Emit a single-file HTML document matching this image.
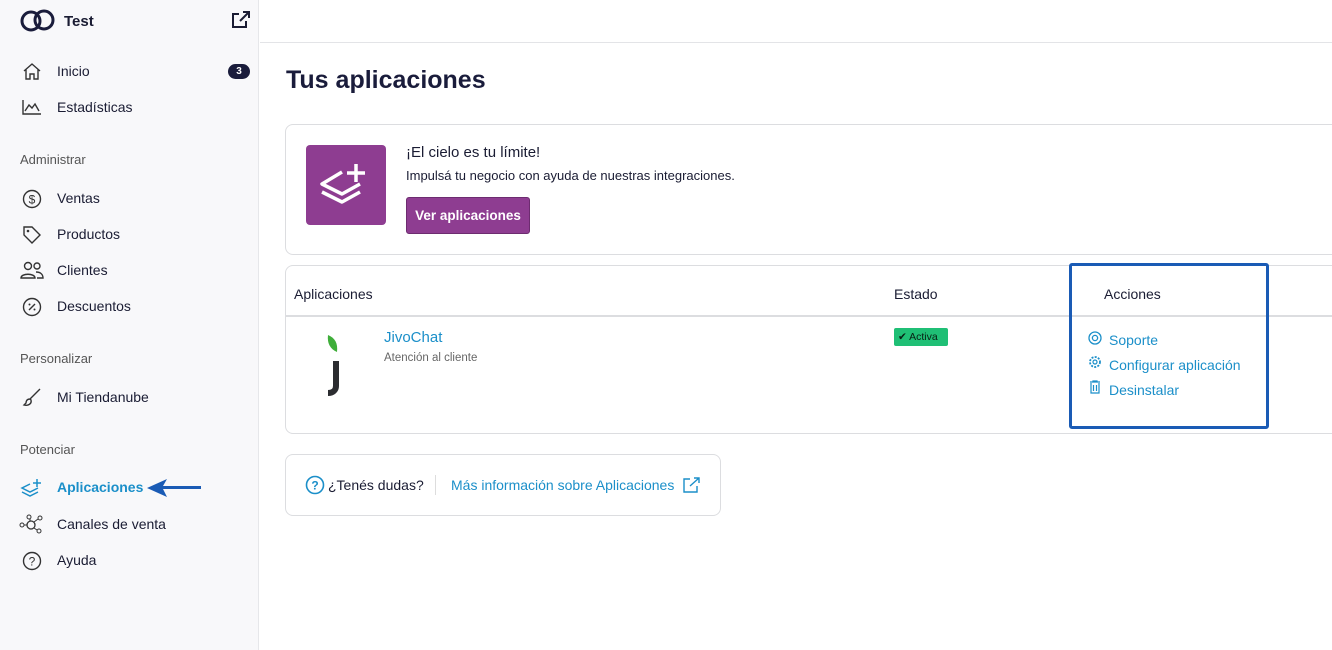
<!DOCTYPE html>
<html><head><meta charset="utf-8"><style>
*{box-sizing:border-box;margin:0;padding:0}
body{width:1332px;height:650px;overflow:hidden;background:#fff;font-family:"Liberation Sans",sans-serif;color:#1a1c33;position:relative}
.sb{position:absolute;left:0;top:0;width:259px;height:650px;background:#f8f8fa;border-right:1px solid #e6e7ea}
.t{position:absolute;font-size:14px;white-space:nowrap}
.ic{position:absolute}
.sec{position:absolute;left:20px;font-size:13px;color:#555}
.card{position:absolute;border:1px solid #dcdde0;border-radius:8px;background:#fff}
.lnk{color:#1b8fc9}
</style></head><body>
<div class="sb">
<svg class="ic" style="left:20px;top:8px" width="36" height="26" viewBox="0 0 36 26"><circle cx="11" cy="13" r="9" fill="none" stroke="#1a1c3b" stroke-width="3"/><circle cx="24" cy="12" r="9" fill="none" stroke="#1a1c3b" stroke-width="3"/></svg>
<div class="t" style="left:64px;top:13px;font-size:15px;font-weight:bold">Test</div>
<svg class="ic" style="left:231px;top:11px" width="20" height="18" viewBox="0 0 20 18"><path d="M8 3H2v13h13v-6" fill="none" stroke="#1a1c33" stroke-width="2"/><path d="M9 10l9-9M12 1h6v6" fill="none" stroke="#1a1c33" stroke-width="2"/></svg>
<svg class="ic" style="left:22px;top:62px" width="20" height="18" viewBox="0 0 20 18"><path d="M2 9L10 2l8 7M4 7v10h4v-5h4v5h4V7" fill="none" stroke="#333" stroke-width="1.4"/></svg>
<div class="t" style="left:57px;top:63px">Inicio</div>
<div style="position:absolute;left:228px;top:64px;width:22px;height:15px;border-radius:8px;background:#1a1c3b;color:#fff;font-size:10px;font-weight:bold;text-align:center;line-height:15px">3</div>
<svg class="ic" style="left:22px;top:99px" width="20" height="16" viewBox="0 0 20 16"><path d="M1 1v14h18M3 12l4-6 3 3 3-4 4 7" fill="none" stroke="#333" stroke-width="1.4"/></svg>
<div class="t" style="left:57px;top:99px">Estadísticas</div>
<div class="sec" style="top:152px">Administrar</div>
<svg class="ic" style="left:22px;top:189px" width="20" height="20" viewBox="0 0 20 20"><circle cx="10" cy="10" r="8.5" fill="none" stroke="#333" stroke-width="1.4"/><text x="10" y="14.5" font-size="12" text-anchor="middle" fill="#333" font-family="Liberation Sans">$</text></svg>
<div class="t" style="left:57px;top:190px">Ventas</div>
<svg class="ic" style="left:22px;top:225px" width="20" height="20" viewBox="0 0 20 20"><path d="M2 2h8l8 8-8 8-8-8z" fill="none" stroke="#333" stroke-width="1.4"/><circle cx="6" cy="6" r="1.3" fill="#333"/></svg>
<div class="t" style="left:57px;top:226px">Productos</div>
<svg class="ic" style="left:20px;top:261px" width="24" height="18" viewBox="0 0 24 18"><circle cx="8" cy="5" r="3.5" fill="none" stroke="#333" stroke-width="1.4"/><circle cx="17" cy="5" r="3" fill="none" stroke="#333" stroke-width="1.4"/><path d="M1 17c0-5 14-5 14 0zM16 11c4 0 7 2 7 6h-6" fill="none" stroke="#333" stroke-width="1.4"/></svg>
<div class="t" style="left:57px;top:262px">Clientes</div>
<svg class="ic" style="left:22px;top:297px" width="20" height="20" viewBox="0 0 20 20"><circle cx="10" cy="10" r="8.5" fill="none" stroke="#333" stroke-width="1.4"/><path d="M7 13l6-6" stroke="#333" stroke-width="1.4"/><circle cx="7.5" cy="7.5" r="1" fill="#333"/><circle cx="12.5" cy="12.5" r="1" fill="#333"/></svg>
<div class="t" style="left:57px;top:298px">Descuentos</div>
<div class="sec" style="top:351px">Personalizar</div>
<svg class="ic" style="left:22px;top:387px" width="20" height="20" viewBox="0 0 20 20"><path d="M18 2L8 12M8 12c-3 0-4 2-4 4l-2 2c4 1 8-1 7-5z" fill="none" stroke="#333" stroke-width="1.4"/></svg>
<div class="t" style="left:57px;top:389px">Mi Tiendanube</div>
<div class="sec" style="top:442px">Potenciar</div>
<svg class="ic" style="left:20px;top:478px" width="24" height="20" viewBox="0 0 24 20"><path d="M10 6L2 10l8 4 8-4M2 14l8 4 8-4M17 1v8M13 5h8" fill="none" stroke="#1b8fc9" stroke-width="1.5"/></svg>
<div class="t" style="left:57px;top:479px;font-weight:bold;color:#1b8fc9">Aplicaciones</div>
<svg class="ic" style="left:145px;top:477px" width="60" height="22" viewBox="0 0 60 22"><path d="M2 11L22 2l-4 7h38v3H18l4 8z" fill="#1a5bb5"/></svg>
<svg class="ic" style="left:19px;top:514px" width="26" height="20" viewBox="0 0 26 20"><circle cx="3" cy="11" r="2" fill="none" stroke="#333"/><circle cx="12" cy="11" r="4" fill="none" stroke="#333" stroke-width="1.3"/><circle cx="10" cy="3" r="2" fill="none" stroke="#333"/><circle cx="21" cy="4" r="2" fill="none" stroke="#333"/><circle cx="20" cy="17" r="2" fill="none" stroke="#333"/><path d="M5 11h3M11 5v2M19 5l-4 3M18 16l-3-2" stroke="#333"/></svg>
<div class="t" style="left:57px;top:516px">Canales de venta</div>
<svg class="ic" style="left:22px;top:551px" width="20" height="20" viewBox="0 0 20 20"><circle cx="10" cy="10" r="8.5" fill="none" stroke="#333" stroke-width="1.4"/><text x="10" y="14.5" font-size="12" text-anchor="middle" fill="#333" font-family="Liberation Sans">?</text></svg>
<div class="t" style="left:57px;top:552px">Ayuda</div>
</div>
<div style="position:absolute;left:260px;top:42px;width:1072px;height:1px;background:#e3e4e7"></div>
<div class="t" style="left:286px;top:66px;font-size:25px;font-weight:bold;color:#1a1c3b">Tus aplicaciones</div>

<div class="card" style="left:285px;top:124px;width:1100px;height:131px"></div>
<div style="position:absolute;left:306px;top:145px;width:80px;height:80px;background:#8e3d91;border-radius:4px"></div>
<svg class="ic" style="left:316px;top:160px" width="56" height="50" viewBox="0 0 56 50"><path d="M26 12L6 24l20 10 18-10M6 32l20 10 18-10" fill="none" stroke="#fff" stroke-width="3.5" stroke-linejoin="round"/><path d="M40 4v18M31 13h18" stroke="#fff" stroke-width="3.5"/></svg>
<div class="t" style="left:406px;top:144px;font-size:15px">¡El cielo es tu límite!</div>
<div class="t" style="left:406px;top:168px;font-size:13px">Impulsá tu negocio con ayuda de nuestras integraciones.</div>
<div style="position:absolute;left:406px;top:197px;width:124px;height:37px;background:#8e3d91;border:1px solid #6d2c70;border-radius:3px;color:#fff;font-size:13.5px;font-weight:bold;text-align:center;line-height:35px">Ver aplicaciones</div>

<div class="card" style="left:285px;top:265px;width:1100px;height:169px"></div>
<div style="position:absolute;left:286px;top:315px;width:1046px;height:2px;background:#dcdde0"></div>
<div class="t" style="left:294px;top:286px">Aplicaciones</div>
<div class="t" style="left:894px;top:286px">Estado</div>
<div class="t" style="left:1104px;top:286px">Acciones</div>
<svg class="ic" style="left:322px;top:334px" width="24" height="62" viewBox="0 0 24 62"><path d="M6 1c7 3 10 8 9 17C8 15 5 9 6 1z" fill="#3fae3a"/><path d="M14 27v25c0 4-3 7-8 7" fill="none" stroke="#2b2c30" stroke-width="6"/></svg>
<div class="t lnk" style="left:384px;top:329px;font-size:15px">JivoChat</div>
<div class="t" style="left:384px;top:352px;font-size:11.5px;color:#666">Atención al cliente</div>
<div style="position:absolute;left:894px;top:328px;width:54px;height:18px;background:#1fbf75;border-radius:2px;font-size:10.5px;line-height:18px;padding-left:4px;color:#082014">✔ Activa</div>
<svg class="ic" style="left:1088px;top:331px" width="14" height="14" viewBox="0 0 14 14"><circle cx="7" cy="7" r="6" fill="none" stroke="#1b8fc9" stroke-width="1.3"/><circle cx="7" cy="7" r="2.6" fill="none" stroke="#1b8fc9" stroke-width="1.3"/></svg>
<div class="t lnk" style="left:1109px;top:332px">Soporte</div>
<svg class="ic" style="left:1088px;top:355px" width="14" height="14" viewBox="0 0 14 14"><circle cx="7" cy="7" r="5" fill="none" stroke="#1b8fc9" stroke-width="1.8" stroke-dasharray="2 1.3"/><circle cx="7" cy="7" r="2" fill="none" stroke="#1b8fc9" stroke-width="1.2"/></svg>
<div class="t lnk" style="left:1109px;top:357px">Configurar aplicación</div>
<svg class="ic" style="left:1089px;top:380px" width="12" height="14" viewBox="0 0 12 14"><path d="M1 2h10M4 2V1h4v1M2 3v10h8V3M4.5 5v6M7.5 5v6" fill="none" stroke="#1b8fc9" stroke-width="1.2"/></svg>
<div class="t lnk" style="left:1109px;top:382px">Desinstalar</div>
<div style="position:absolute;left:1069px;top:263px;width:200px;height:166px;border:3px solid #1a5bb5;border-radius:3px"></div>

<div class="card" style="left:285px;top:454px;width:436px;height:62px"></div>
<svg class="ic" style="left:305px;top:475px" width="20" height="20" viewBox="0 0 20 20"><circle cx="10" cy="10" r="8.5" fill="none" stroke="#1b8fc9" stroke-width="1.6"/><text x="10" y="14.5" font-size="12" font-weight="bold" text-anchor="middle" fill="#1b8fc9" font-family="Liberation Sans">?</text></svg>
<div class="t" style="left:328px;top:477px">¿Tenés dudas?</div>
<div style="position:absolute;left:435px;top:475px;width:1px;height:20px;background:#ddd"></div>
<div class="t lnk" style="left:451px;top:477px">Más información sobre Aplicaciones</div>
<svg class="ic" style="left:683px;top:477px" width="17" height="16" viewBox="0 0 17 16"><path d="M7 2H1v13h13V9" fill="none" stroke="#1b8fc9" stroke-width="1.4"/><path d="M7 9l9-8M11 1h5v5" fill="none" stroke="#1b8fc9" stroke-width="1.4"/></svg>
</body></html>
